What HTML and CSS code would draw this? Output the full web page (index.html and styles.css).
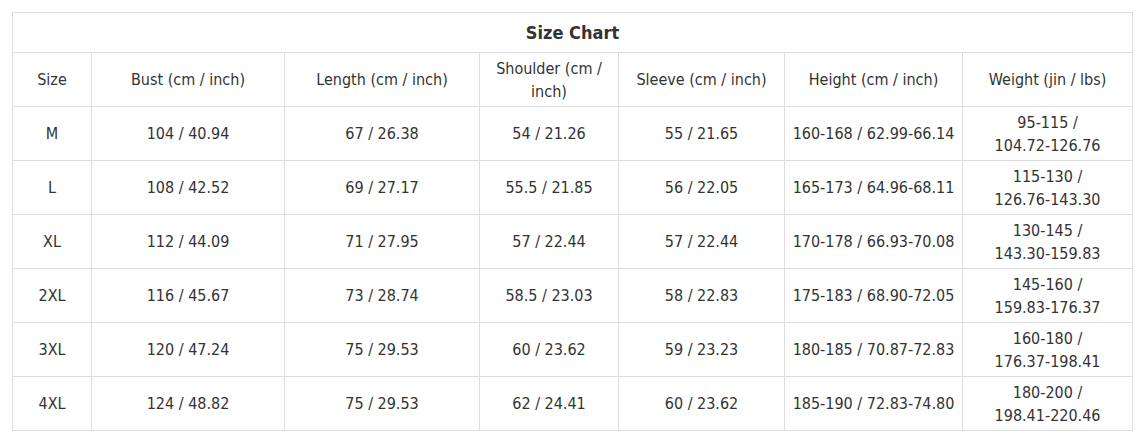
FILE: index.html
```html
<!DOCTYPE html>
<html>
<head>
<meta charset="utf-8">
<link rel="stylesheet" href="styles.css">
</head>
<body>
<table class="chart">
<colgroup>
<col class="c1"><col class="c2"><col class="c3"><col class="c4"><col class="c5"><col class="c6"><col class="c7">
</colgroup>
<thead>
<tr class="title-row"><th colspan="7">Size Chart</th></tr>
<tr class="head-row">
<td>Size</td><td>Bust (cm / inch)</td><td>Length (cm / inch)</td><td>Shoulder (cm /<br>inch)</td><td>Sleeve (cm / inch)</td><td>Height (cm / inch)</td><td>Weight (jin / lbs)</td>
</tr>
</thead>
<tbody>
<tr><td>M</td><td>104 / 40.94</td><td>67 / 26.38</td><td>54 / 21.26</td><td>55 / 21.65</td><td>160-168 / 62.99-66.14</td><td>95-115 /<br>104.72-126.76</td></tr>
<tr><td>L</td><td>108 / 42.52</td><td>69 / 27.17</td><td>55.5 / 21.85</td><td>56 / 22.05</td><td>165-173 / 64.96-68.11</td><td>115-130 /<br>126.76-143.30</td></tr>
<tr><td>XL</td><td>112 / 44.09</td><td>71 / 27.95</td><td>57 / 22.44</td><td>57 / 22.44</td><td>170-178 / 66.93-70.08</td><td>130-145 /<br>143.30-159.83</td></tr>
<tr><td>2XL</td><td>116 / 45.67</td><td>73 / 28.74</td><td>58.5 / 23.03</td><td>58 / 22.83</td><td>175-183 / 68.90-72.05</td><td>145-160 /<br>159.83-176.37</td></tr>
<tr><td>3XL</td><td>120 / 47.24</td><td>75 / 29.53</td><td>60 / 23.62</td><td>59 / 23.23</td><td>180-185 / 70.87-72.83</td><td>160-180 /<br>176.37-198.41</td></tr>
<tr><td>4XL</td><td>124 / 48.82</td><td>75 / 29.53</td><td>62 / 24.41</td><td>60 / 23.62</td><td>185-190 / 72.83-74.80</td><td>180-200 /<br>198.41-220.46</td></tr>
</tbody>
</table>
</body>
</html>
```

FILE: styles.css
```css
html, body {
  margin: 0;
  padding: 0;
  background: #fff;
}
body {
  padding: 12px;
  font-family: "DejaVu Sans Condensed", "DejaVu Sans", sans-serif;
  font-size: 16px;
  color: #333;
}
.chart {
  border-collapse: collapse;
  table-layout: fixed;
  width: 1120px;
}
.c1 { width: 79px; }
.c2 { width: 193px; }
.c3 { width: 195px; }
.c4 { width: 139px; }
.c5 { width: 166px; }
.c6 { width: 178px; }
.c7 { width: 170px; }
.chart th,
.chart td {
  border: 1px solid #dddddd;
  text-align: center;
  vertical-align: middle;
  line-height: 23px;
  padding: 0 4px;
}
.title-row th {
  height: 39px;
  font-size: 18px;
  font-weight: bold;
  color: #333;
}
.head-row td,
.chart tbody td {
  height: 53px;
}
```
